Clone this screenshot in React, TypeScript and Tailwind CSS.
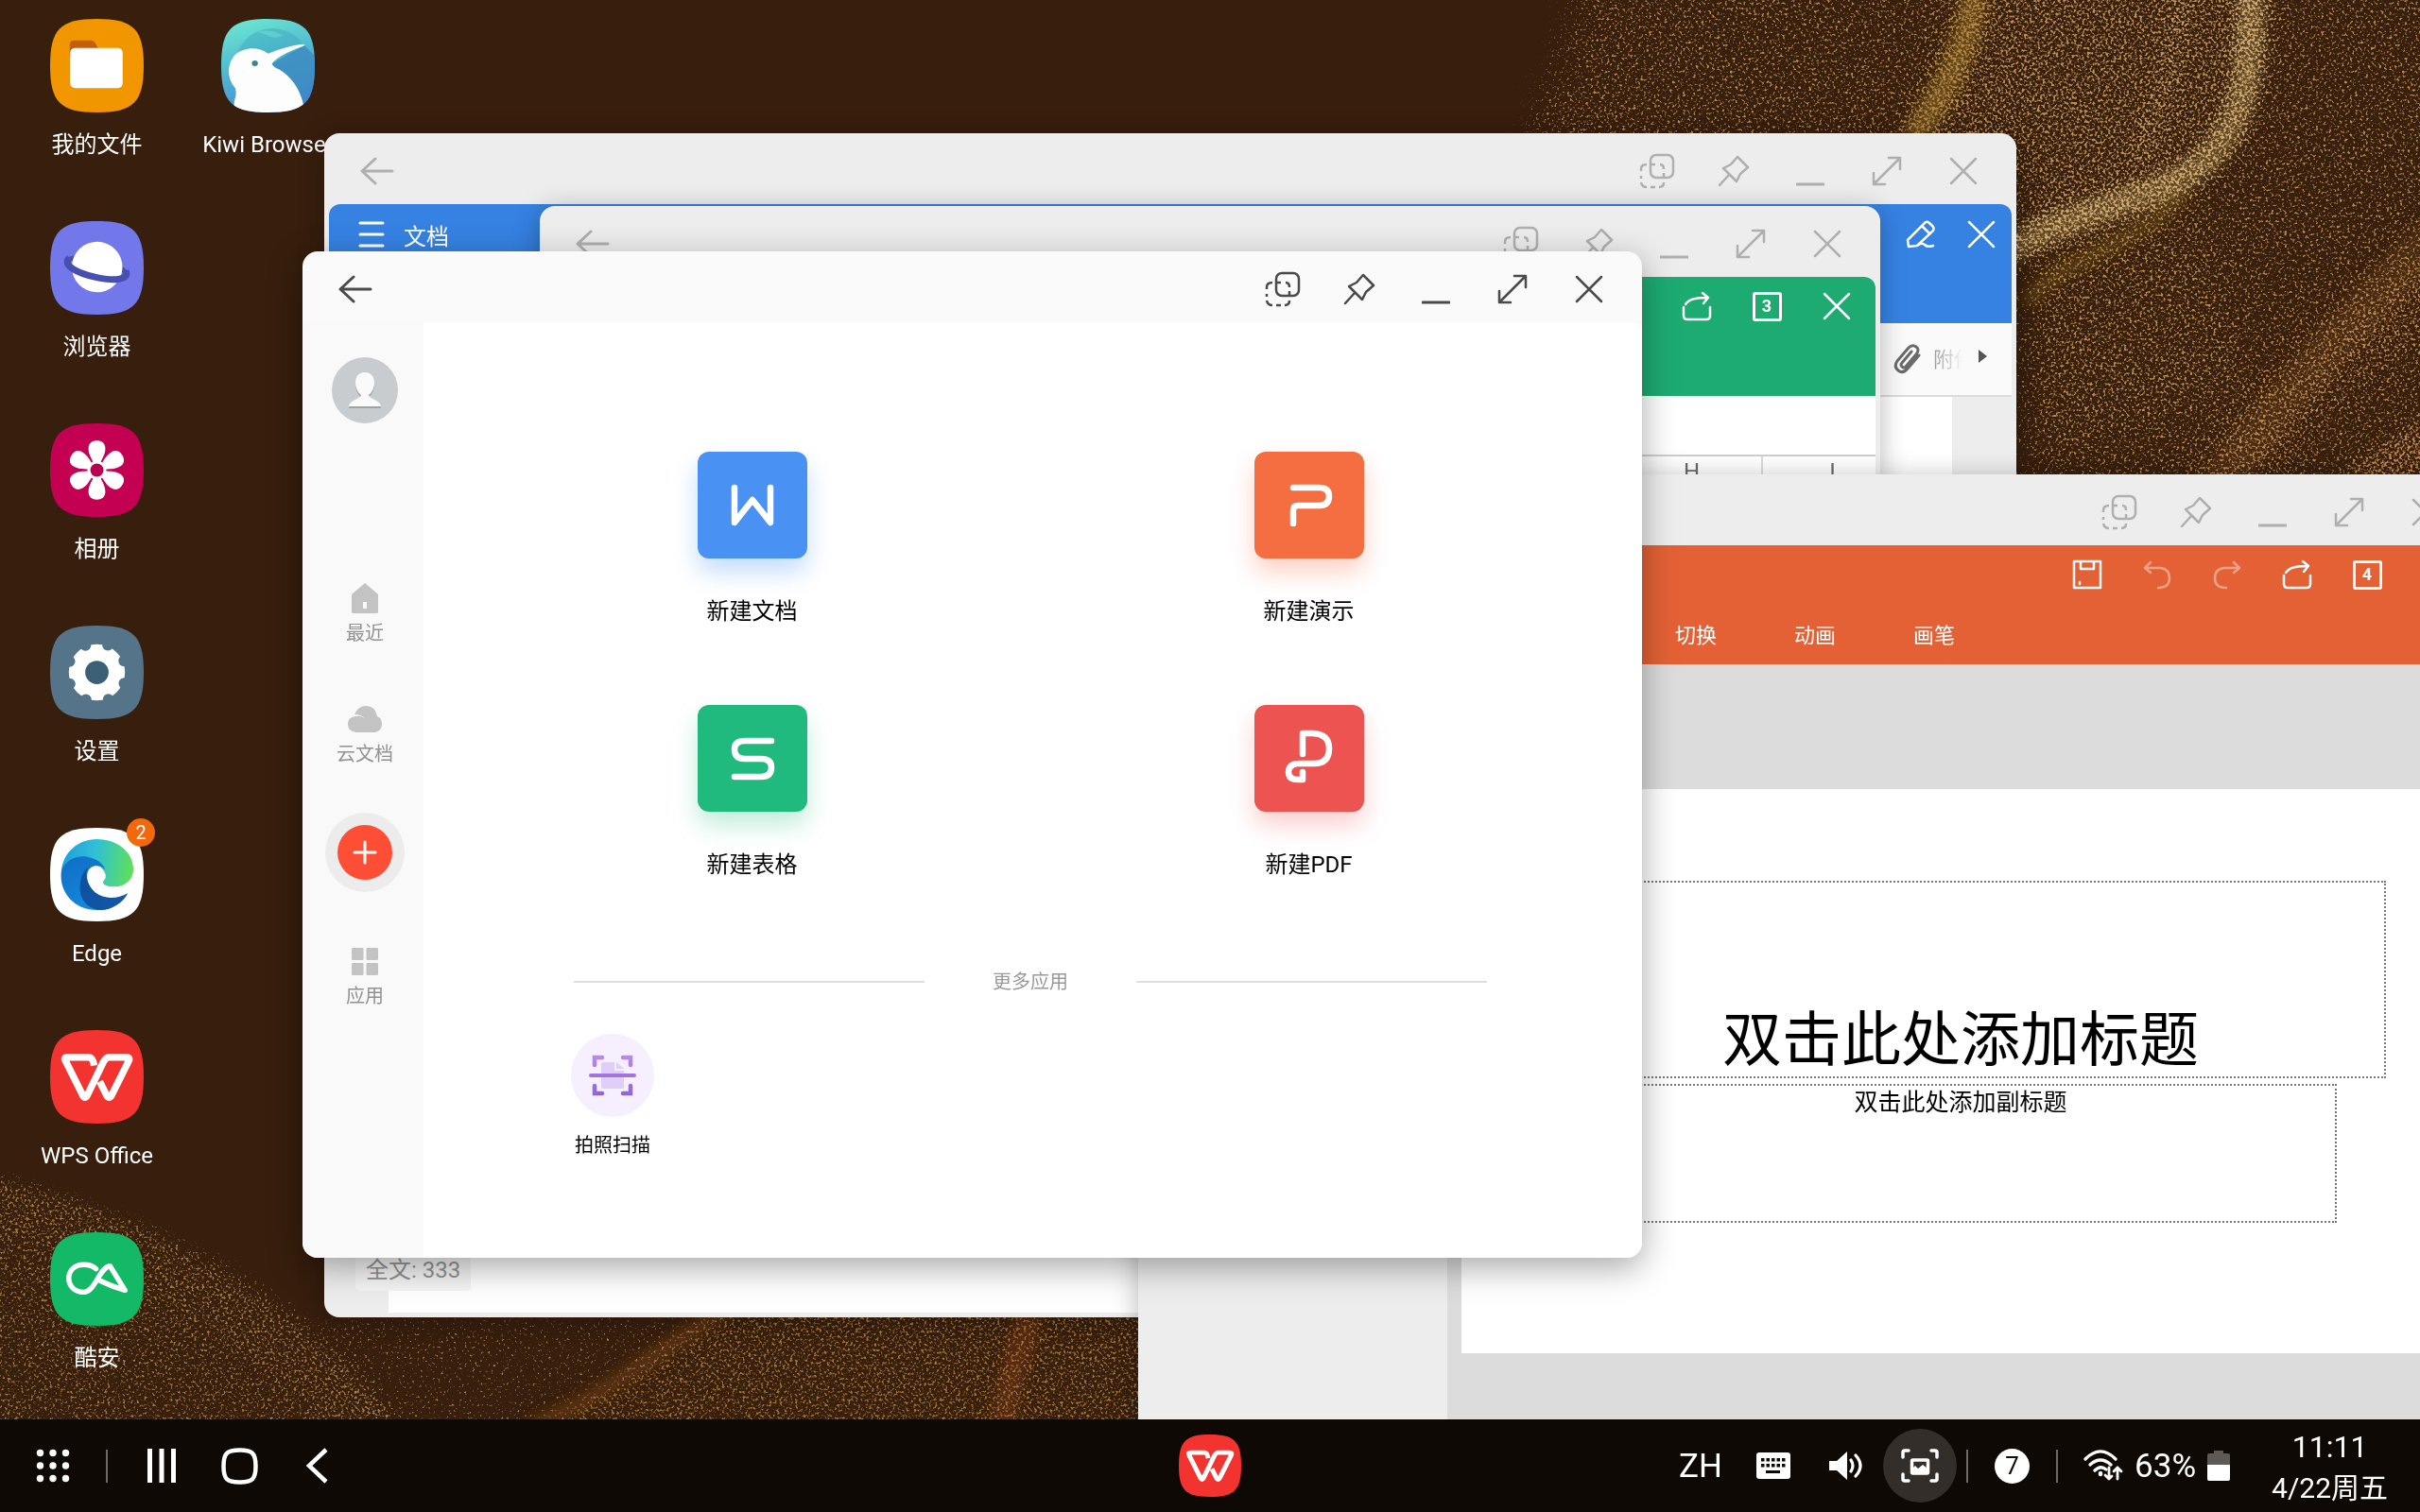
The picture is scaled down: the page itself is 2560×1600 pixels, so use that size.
import React from "react";

type IconProps = { w: number; h: number; vb?: string; sw?: number; className?: string; children: React.ReactNode };

function Icon({ w, h, vb, sw = 2.5, className, children }: IconProps) {
  return (
    <svg
      width={w}
      height={h}
      viewBox={vb ?? `0 0 ${w} ${h}`}
      fill="none"
      stroke="currentColor"
      strokeWidth={sw}
      strokeLinecap="round"
      strokeLinejoin="round"
      className={className}
      aria-hidden="true"
    >
      {children}
    </svg>
  );
}

/* ---------- Wallpaper ---------- */

function Wallpaper() {
  return (
    <svg className="absolute inset-0 h-full w-full" viewBox="0 0 2560 1502" preserveAspectRatio="xMidYMid slice" aria-hidden="true">
      <defs>
        <filter id="sand" x="0" y="0" width="2560" height="1502" filterUnits="userSpaceOnUse" colorInterpolationFilters="sRGB">
          <feTurbulence type="fractalNoise" baseFrequency="0.36" numOctaves="2" seed="7" result="n" />
          <feColorMatrix in="n" type="matrix" values="0 0 0 0 1  0 0 0 0 1  0 0 0 0 1  1 0 0 0 0" result="na" />
          <feComposite in="na" in2="SourceAlpha" operator="arithmetic" k1="0" k2="1" k3="0.36" k4="-0.7" result="c" />
          <feComponentTransfer in="c" result="specks">
            <feFuncA type="linear" slope="5" />
          </feComponentTransfer>
          <feComponentTransfer in="SourceGraphic" result="solid">
            <feFuncA type="linear" slope="6" />
          </feComponentTransfer>
          <feComposite in="solid" in2="specks" operator="in" />
        </filter>
        <filter id="soft6" x="-50%" y="-50%" width="200%" height="200%">
          <feGaussianBlur stdDeviation="7" />
        </filter>
        <filter id="soft20" x="-50%" y="-50%" width="200%" height="200%">
          <feGaussianBlur stdDeviation="18" />
        </filter>
      </defs>
      <rect width="2560" height="1502" fill="#371e0d" />
      <g filter="url(#soft6)" fill="none">
        <path d="M2090 -20 C2085 50 2060 90 2022 150" stroke="#7d5c17" strokeWidth="26" opacity="0.7" />
        <path d="M2380 -20 C2385 100 2370 170 2270 205 C2200 230 2160 240 2120 270" stroke="#a98950" strokeWidth="26" opacity="0.4" />
        <path d="M2310 200 C2270 260 2180 270 2145 320" stroke="#7d5c17" strokeWidth="14" opacity="0.5" />
        <path d="M2590 240 C2520 300 2450 380 2340 520" stroke="#7a4d1e" strokeWidth="44" opacity="0.25" />
        <path d="M770 1385 C690 1430 640 1480 560 1510" stroke="#7a4514" strokeWidth="14" opacity="0.6" />
        <path d="M1090 1390 C1075 1440 1065 1470 1060 1520" stroke="#70330f" strokeWidth="26" opacity="0.6" />
      </g>
      <g filter="url(#sand)">
        <g filter="url(#soft20)">
          <path d="M1680 -40 L1610 170 L2140 170 L2140 520 L2600 520 L2600 -40 Z" fill="#b98d50" opacity="0.42" />
          <path d="M2080 -40 L2010 170 L2140 260 L2300 200 L2400 60 L2400 -40 Z" fill="#bd9358" opacity="0.3" />
          <path d="M2150 260 L2330 210 L2380 420 L2130 480 Z" fill="#bd9358" opacity="0.16" />
          <path d="M2600 240 C2500 300 2420 380 2300 520 L2410 520 L2440 440 L2600 330 Z" fill="#c08850" opacity="0.32" />
        </g>
        <g filter="url(#soft6)">
          <path d="M-20 1240 C60 1262 160 1290 260 1358 C320 1395 370 1440 430 1520 L-20 1520 Z" fill="#a47d42" opacity="0.42" />
          <path d="M-20 1236 C60 1258 160 1286 270 1350 C320 1385 370 1430 430 1520 L350 1520 C250 1400 120 1350 -20 1300 Z" fill="#a47d42" opacity="0.14" />
          <path d="M770 1380 C690 1430 640 1480 560 1510 L1220 1520 L1220 1380 Z" fill="#a2743a" opacity="0.5" />
          <path d="M330 1395 L760 1395 L560 1510 L400 1510 Z" fill="#b58e58" opacity="0.2" />
          <path d="M2600 420 L2450 520 L2520 520 L2600 470 Z" fill="#c08850" opacity="0.5" />
        </g>
        <g filter="url(#soft6)" fill="none">
          <path d="M2090 -20 C2085 50 2060 90 2022 150" stroke="#a98338" strokeWidth="30" opacity="0.4" />
          <path d="M2380 -20 C2385 100 2370 170 2270 205 C2200 230 2160 240 2120 270" stroke="#d9bd80" strokeWidth="34" opacity="0.5" />
          <path d="M2310 -20 C2300 60 2290 110 2260 170" stroke="#d3a86a" strokeWidth="20" opacity="0.3" />
        </g>
      </g>
    </svg>
  );
}

/* ---------- Desktop icons ---------- */

const SQUIRCLE = "M0 50 C0 11 11 0 50 0 S100 11 100 50 89 100 50 100 0 89 0 50Z";

const WPS_MARK =
  "M47 38 C46 31 44 29 41 29 H19 Q14 29 16.500 33 L35 70 Q37 74 39.500 70 L57 34 Q60 29 63 29 H81 Q86 29 84 33 L65.500 70 Q63 74 60.500 70 L53 55";

function FilesArt() {
  return (
    <>
      <path d={SQUIRCLE} fill="#f29600" />
      <path d="M21 40 V28 Q21 23 26 23 H43 Q47 23 49 27 L54 36 Z" fill="#c25e0c" />
      <rect x="21.500" y="31" width="56" height="43" rx="5" fill="#fff" />
    </>
  );
}

function KiwiArt() {
  return (
    <>
      <defs>
        <linearGradient id="kiwiBg" x1="0.300" y1="0" x2="0.600" y2="1">
          <stop offset="0" stopColor="#6ae4d2" />
          <stop offset="0.500" stopColor="#4fb4cf" />
          <stop offset="1" stopColor="#4a86dc" />
        </linearGradient>
        <clipPath id="kiwiClip">
          <path d={SQUIRCLE} />
        </clipPath>
      </defs>
      <g clipPath="url(#kiwiClip)">
        <rect width="100" height="100" fill="url(#kiwiBg)" />
        <circle cx="55" cy="50" r="40" fill="#3fa9bf" opacity="0.5" />
        <path d="M38 14 Q54 10 66 18 Q56 22 50 18 Q44 16 38 14Z" fill="#6ad8d0" opacity="0.6" />
        <path d="M54 48 L89 28 L100 40 V90 H86 Z" fill="#3c86c0" opacity="0.7" />
        <path
          d="M13 102 L14 88 Q17 80 15 74 Q8 66 8 55 Q10 34 31 31.500 Q42 31 50 37 Q70 29 87 27 Q91 27 88 29 Q62 38 54 48 Q56 52 62 54 Q82 66 88 92 V102 Z"
          fill="#fdfdfd"
        />
        <ellipse cx="36" cy="47.500" rx="3.200" ry="3" fill="#3d8195" />
      </g>
    </>
  );
}

function BrowserArt() {
  return (
    <>
      <path d={SQUIRCLE} fill="#7277ea" />
      <g transform="rotate(13 50 50)">
        <ellipse cx="50" cy="50" rx="32" ry="8.500" fill="none" stroke="#474fb0" strokeWidth="5" />
        <circle cx="50" cy="49" r="27" fill="#fff" />
        <path d="M19 46 C12 56 32 60 50 60 C68 60 88 56 81 46" fill="none" stroke="#474fb0" strokeWidth="7" />
      </g>
    </>
  );
}

function GalleryArt() {
  return (
    <>
      <path d={SQUIRCLE} fill="#c40052" />
      {[0, 60, 120, 180, 240, 300].map((a) => (
        <path
          key={a}
          transform={`rotate(${a} 50 50)`}
          d="M47 44 C45 38 41 34 41 27 C41 21 45 18.500 50 18.500 C55 18.500 59 21 59 27 C59 34 55 38 53 44 L50 50Z"
          fill="#fff"
        />
      ))}
      <circle cx="50" cy="50" r="10" fill="#fff" />
      <circle cx="50" cy="50" r="7" fill="#b80050" />
    </>
  );
}

function SettingsArt() {
  return (
    <>
      <path d={SQUIRCLE} fill="#55748a" />
      <circle cx="50" cy="50" r="30" fill="#fff" />
      {[0, 45, 90, 135, 180, 225, 270, 315].map((a) => (
        <circle key={a} cx="50" cy="18.500" r="6" fill="#55748a" transform={`rotate(${a + 22} 50 50)`} />
      ))}
      <circle cx="50" cy="50" r="12.500" fill="#3b6074" />
    </>
  );
}

function EdgeArt() {
  return (
    <>
      <defs>
        <linearGradient id="edgeTop" x1="0" y1="0.400" x2="1" y2="0.500">
          <stop offset="0" stopColor="#1f9fdd" />
          <stop offset="0.450" stopColor="#2fc0d6" />
          <stop offset="1" stopColor="#5fe05a" />
        </linearGradient>
        <linearGradient id="edgeLeft" x1="0" y1="0" x2="0.700" y2="1">
          <stop offset="0" stopColor="#0f6cc4" />
          <stop offset="1" stopColor="#168ee0" />
        </linearGradient>
        <linearGradient id="edgeDark" x1="0" y1="0" x2="1" y2="0.600">
          <stop offset="0" stopColor="#0b4f9c" />
          <stop offset="1" stopColor="#1358a8" />
        </linearGradient>
      </defs>
      <path d={SQUIRCLE} fill="#fff" />
      <path d="M12 46 C14 26 30 12 50 12 C73 12 89 27 89 44 C89 56 80 63 69 63 C60 63 55 60 57 57 C60 54 60 51 58 47 C53 38 38 30 24 36 C18 38 14 42 12 46Z" fill="url(#edgeTop)" />
      <path d="M12 46 C17 33 30 29 40 31 C50 33 57 38 59 45 C52 38 42 40 40 48 C37 62 50 76 66 77 C73 77 79 73 83 70 C76 82 64 88 50 88 C27 88 9 70 12 46Z" fill="url(#edgeLeft)" />
      <path d="M42 41 C36 46 38 60 48 69 C58 77 72 76 83 70 C78 80 66 88 54 88 C40 87 31 76 32 63 C32 53 36 45 42 41Z" fill="url(#edgeDark)" />
    </>
  );
}

function WpsArt() {
  return (
    <>
      <path d={SQUIRCLE} fill="#f3332f" />
      <path d={WPS_MARK} fill="none" stroke="#fff" strokeWidth="7.500" strokeLinecap="butt" strokeLinejoin="round" />
    </>
  );
}

function CoolapkArt() {
  return (
    <>
      <path d={SQUIRCLE} fill="#14b967" />
      <path
        d="M49 39 C46 36 42 34.500 36 34.500 C26 34.500 20 41 20 49 C20 57.500 26 64 36 64 C48 64 53 37 64 36 L80 62 Q66 58 54 52"
        fill="none"
        stroke="#fff"
        strokeWidth="5.500"
        strokeLinecap="round"
        strokeLinejoin="round"
      />
    </>
  );
}

type App = { name: string; art: React.ReactNode; badge?: string };

const COLUMN_ONE: App[] = [
  { name: "我的文件", art: <FilesArt /> },
  { name: "浏览器", art: <BrowserArt /> },
  { name: "相册", art: <GalleryArt /> },
  { name: "设置", art: <SettingsArt /> },
  { name: "Edge", art: <EdgeArt />, badge: "2" },
  { name: "WPS Office", art: <WpsArt /> },
  { name: "酷安", art: <CoolapkArt /> },
];

const COLUMN_TWO: App[] = [{ name: "Kiwi Browser", art: <KiwiArt /> }];

function DesktopIcon({ name, art, badge }: App) {
  return (
    <button className="flex h-[214px] w-[181px] flex-col items-center pt-5 text-white">
      <span className="relative">
        <svg width="99" height="99" viewBox="0 0 100 100" aria-hidden="true">
          {art}
        </svg>
        {badge && (
          <span className="absolute -top-2.5 -right-3 flex h-[30px] w-[30px] items-center justify-center rounded-full bg-[#f2690d] text-[20px]">
            {badge}
          </span>
        )}
      </span>
      <span className="mt-4 text-[24px] leading-9 whitespace-nowrap">{name}</span>
    </button>
  );
}

/* ---------- Window frame ---------- */

function BackArrow() {
  return (
    <Icon w={36} h={30} sw={3}>
      <path d="M16 2 L2 15 L16 28 M2 15 H34" />
    </Icon>
  );
}

function Cross() {
  return (
    <Icon w={30} h={30}>
      <path d="M2 2 L28 28 M28 2 L2 28" />
    </Icon>
  );
}

const FRAME_BUTTONS: { label: string; icon: React.ReactNode }[] = [
  {
    label: "切换视图",
    icon: (
      <Icon w={38} h={38}>
        <rect x="12" y="2" width="24" height="24" rx="6" />
        <path d="M2 19 V17 Q2 12 8 12 M13 12 H17 M22 12 Q26 12 26 17 M26 21 V25 M2 24 V27 M2 31 Q3 36 8 36 M12 36 H17 M21 36 Q26 36 26 31" strokeLinecap="butt" />
      </Icon>
    ),
  },
  {
    label: "固定",
    icon: (
      <Icon w={34} h={34}>
        <path d="M21 2 L32 13 L24 20 L20 28 L6 14 L14 10 Z M12 21 L2 32" />
      </Icon>
    ),
  },
  {
    label: "最小化",
    icon: (
      <Icon w={30} h={32} sw={3}>
        <path d="M1 30 H29" />
      </Icon>
    ),
  },
  {
    label: "最大化",
    icon: (
      <Icon w={32} h={32}>
        <path d="M2 30 L30 2 M18 2 H30 V14 M2 18 V30 H14" />
      </Icon>
    ),
  },
  { label: "关闭", icon: <Cross /> },
];

function Window({
  title,
  active,
  place,
  children,
}: {
  title: string;
  active?: boolean;
  place: string;
  children: React.ReactNode;
}) {
  const tone = active
    ? "bg-[#fafafa] text-[#4a4a4a] shadow-[0_10px_36px_rgba(0,0,0,0.35)]"
    : "bg-[#ededed] text-[#afafaf] shadow-[0_4px_28px_rgba(0,0,0,0.28)]";
  return (
    <section aria-label={title} className={`absolute flex flex-col overflow-hidden rounded-2xl ${place} ${tone}`}>
      <header className="flex h-[75px] shrink-0 items-center pt-1 pr-4 pl-[38px]">
        <button aria-label="返回">
          <BackArrow />
        </button>
        <div className="ml-auto flex items-center">
          {FRAME_BUTTONS.map((b) => (
            <button key={b.label} aria-label={b.label} className="flex w-[81px] justify-center">
              {b.icon}
            </button>
          ))}
        </div>
      </header>
      {children}
    </section>
  );
}

/* ---------- Shared toolbar icons ---------- */

function ShareIcon() {
  return (
    <Icon w={32} h={32}>
      <path d="M4 14 C8 8 16 7 28 7 M22 2 L28 7 L23 13 M2 17 V26 Q2 30 6 30 H26 Q30 30 30 26 V17" />
    </Icon>
  );
}

function CountBox({ n }: { n: string }) {
  return (
    <span className="flex h-[31px] w-[31px] items-center justify-center rounded-[3px] border-[3px] border-current text-[18px] leading-none font-bold">
      {n}
    </span>
  );
}

function ToolButton({ label, children, faded }: { label: string; children: React.ReactNode; faded?: boolean }) {
  return (
    <button aria-label={label} className={`flex w-[74px] justify-center ${faded ? "opacity-40" : ""}`}>
      {children}
    </button>
  );
}

/* ---------- Document window ---------- */

function DocumentWindow() {
  return (
    <Window title="文档" place="top-[141px] left-[343px] h-[1253px] w-[1790px]">
      <div className="relative mx-[5px] mb-[5px] flex grow flex-col overflow-hidden rounded-t-xl">
        <div className="h-[126px] shrink-0 bg-[#3582e3] text-white">
          <div className="flex h-16 items-center pl-[31px]">
            <button aria-label="菜单">
              <Icon w={28} h={28} sw={3}>
                <path d="M2 2 H26 M2 14 H26 M2 26 H26" />
              </Icon>
            </button>
            <span className="ml-5 pt-1.5 text-[24px]">文档</span>
            <div className="ml-auto flex items-center">
              <button aria-label="编辑" className="flex w-16 justify-center">
                <Icon w={32} h={32}>
                  <path d="M3 29 L2 22 L21 3 Q23 2 25 4 L29 8 Q30 10 29 12 L12 28 Z M17 7 L25 15 M12 28 Q17 24 20 27 Q23 30 29 28" />
                </Icon>
              </button>
              <button aria-label="关闭文档" className="flex w-16 justify-center">
                <Cross />
              </button>
            </div>
          </div>
        </div>
        <div className="flex h-[78px] shrink-0 items-center justify-end gap-3 border-b-2 border-[#dcdcdc] bg-[#fafafa] pr-[26px]">
          <button className="flex items-center gap-3">
            <Icon w={30} h={32} sw={3} className="text-[#6a6a6a]">
              <path d="M27 12 L15 26 Q10 32 5 28 Q0 24 4 18 L16 4 Q20 0 24 3 Q28 6 24 11 L13 24 Q11 26 9 24 Q7 22 9 20 L19 8" />
            </Icon>
            <span className="w-[32px] overflow-hidden bg-gradient-to-r from-[#9a9a9a] to-[#fafafa] bg-clip-text text-[22px] whitespace-nowrap text-transparent">
              附件
            </span>
          </button>
          <button aria-label="更多工具" className="ml-1 pb-1.5">
            <svg width="9" height="14" viewBox="0 0 9 14" aria-hidden="true">
              <path d="M0 0 L9 7 L0 14Z" fill="#555" />
            </svg>
          </button>
        </div>
        <div className="mx-[63px] grow bg-white" />
        <p className="absolute bottom-[23px] left-[28px] rounded bg-[#f5f5f5] px-[11px] pt-1.5 pb-1.5 text-[24px] leading-8 text-[#939393]">
          全文: 333
        </p>
      </div>
    </Window>
  );
}

/* ---------- Spreadsheet window ---------- */

function SheetWindow() {
  return (
    <Window title="表格" place="top-[218px] left-[571px] h-[1065px] w-[1418px]">
      <div className="mx-[5px] mb-[5px] flex grow flex-col overflow-hidden rounded-t-xl bg-white">
        <div className="h-[126px] shrink-0 bg-[#1dab72] text-white">
          <div className="flex h-[62px] items-center justify-end pr-1">
            <ToolButton label="分享">
              <ShareIcon />
            </ToolButton>
            <ToolButton label="打开的文件">
              <CountBox n="3" />
            </ToolButton>
            <ToolButton label="关闭表格">
              <Cross />
            </ToolButton>
          </div>
        </div>
        <div className="h-[64px] shrink-0 border-b-2 border-[#cfcfcf]" />
        <table className="w-max table-fixed text-[24px] text-[#6a6a6a]">
          <thead>
            <tr>
              <th className="w-[96px] min-w-[96px] border-r-2 border-[#dcdcdc]" aria-label="行号" />
              {["A", "B", "C", "D", "E", "F", "G", "H", "I"].map((c) => (
                <th key={c} className="w-[149px] min-w-[149px] border-r-2 border-[#dcdcdc] py-0 leading-8 font-normal">
                  {c}
                </th>
              ))}
            </tr>
          </thead>
        </table>
      </div>
    </Window>
  );
}

/* ---------- Presentation window ---------- */

function SlidesWindow() {
  return (
    <Window title="演示" place="top-[502px] left-[1204px] h-[1065px] w-[1418px]">
      <div className="mx-[5px] mb-[5px] flex grow flex-col overflow-hidden rounded-t-xl">
        <div className="h-[126px] shrink-0 bg-[#e46135] text-white">
          <div className="flex h-[62px] items-center justify-end pr-0.5">
            <ToolButton label="保存">
              <Icon w={32} h={32}>
                <path d="M2 2 H30 V30 H2 Z M9 2 V10 H23 V2 M8 24 V26" />
              </Icon>
            </ToolButton>
            <ToolButton label="撤销" faded>
              <Icon w={30} h={32}>
                <path d="M8 3 L2 9 L8 14 M2 9 H18 Q28 10 28 20 Q28 30 16 30" />
              </Icon>
            </ToolButton>
            <ToolButton label="重做" faded>
              <Icon w={30} h={32}>
                <path d="M22 3 L28 9 L22 14 M28 9 H12 Q2 10 2 20 Q2 30 14 30" />
              </Icon>
            </ToolButton>
            <ToolButton label="分享">
              <ShareIcon />
            </ToolButton>
            <ToolButton label="打开的文件">
              <CountBox n="4" />
            </ToolButton>
            <ToolButton label="关闭演示">
              <Cross />
            </ToolButton>
          </div>
          <nav className="flex h-16 items-center pt-0.5 pl-[522px] text-[22px]">
            {["切换", "动画", "画笔"].map((t) => (
              <button key={t} className="w-[126px]">
                {t}
              </button>
            ))}
          </nav>
        </div>
        <div className="flex grow">
          <div className="w-[322px] shrink-0" />
          <div className="grow bg-[#dcdcdc] px-[15px] pt-[132px]">
            <div className="h-[597px] bg-white pt-[97px] text-center text-black">
              <div className="mx-auto flex h-[209px] w-[900px] items-end justify-center border-2 border-dotted border-[#777] text-[63px] leading-[76px]">
                双击此处添加标题
              </div>
              <div className="mx-auto mt-1.5 h-[147px] w-[796px] border-2 border-dotted border-[#777] text-[25px] leading-9">
                双击此处添加副标题
              </div>
            </div>
          </div>
        </div>
      </div>
    </Window>
  );
}

/* ---------- Launcher window ---------- */

const TILES: { name: string; tone: string; d: string }[] = [
  { name: "新建文档", tone: "bg-[#4991f2] shadow-[0_14px_26px_rgba(73,145,242,0.32)]", d: "M39 38 V75 L58 51 L77 75 V38" },
  { name: "新建演示", tone: "bg-[#f56e42] shadow-[0_14px_26px_rgba(245,110,66,0.32)]", d: "M41 38 H68 Q79 38 79 47 Q79 57 68 57 H46 Q41 57 41 62 V76" },
  { name: "新建表格", tone: "bg-[#20ba7e] shadow-[0_14px_26px_rgba(32,186,126,0.28)]", d: "M78 38 H50 Q39 38 39 47 Q39 57 50 57 H67 Q78 57 78 66 Q78 76 67 76 H39" },
  { name: "新建PDF", tone: "bg-[#ec5351] shadow-[0_14px_26px_rgba(236,83,81,0.28)]", d: "M51 52 V30 H62 Q79 31 79 46 Q79 62 63 62 H48 Q36 62 36 71 Q36 79 46 79 H51 V71" },
];

function NavItem({ label, children }: { label: string; children: React.ReactNode }) {
  return (
    <button className="flex h-32 w-full flex-col items-center text-[20px] leading-7 text-[#929292]">
      <span className="mb-1.5 flex h-[34px] items-center text-[#c3c3c3]">{children}</span>
      {label}
    </button>
  );
}

function LauncherWindow() {
  return (
    <Window title="WPS Office" active place="top-[266px] left-[320px] h-[1065px] w-[1417px]">
      <div className="flex grow">
        <nav className="flex w-[128px] shrink-0 flex-col items-center bg-[#f9f9f9] pt-[37px] pl-1">
          <button aria-label="账户" className="flex h-[70px] w-[70px] items-center justify-center overflow-hidden rounded-full bg-[#c9cccf]">
            <svg width="36" height="40" viewBox="0 0 36 40" aria-hidden="true">
              <path d="M18 3 C25 3 28 8 28 14 C28 20 25 25 22 27 C22 31 34 32 35 39 H1 C2 32 14 31 14 27 C11 25 8 20 8 14 C8 8 11 3 18 3Z" fill="#9fa2a5" />
              <path d="M18 1 C25 1 28 6 28 12 C28 18 25 23 22 25 C22 29 34 30 35 37 H1 C2 30 14 29 14 25 C11 23 8 18 8 12 C8 6 11 1 18 1Z" fill="#fafafa" />
            </svg>
          </button>
          <div className="mt-[168px] w-full">
            <NavItem label="最近">
              <svg width="30" height="34" viewBox="0 0 30 34" aria-hidden="true">
                <path d="M15 1 L29 13 V32 Q29 33 28 33 H2 Q1 33 1 32 V13 Z" fill="currentColor" />
                <rect x="13" y="21" width="4" height="7" fill="#fafafa" />
              </svg>
            </NavItem>
            <NavItem label="云文档">
              <svg width="36" height="28" viewBox="0 0 36 28" aria-hidden="true">
                <path d="M9 28 Q0 27 0 19 Q0 12 8 11 Q14 10 18 13 Q14 9 7 9 Q11 0 19 0 Q29 0 31 11 Q36 13 36 19 Q36 27 28 28 Z" fill="currentColor" />
              </svg>
            </NavItem>
            <div className="-mt-3 flex h-[140px] justify-center">
              <button aria-label="新建" className="flex h-[84px] w-[84px] items-center justify-center rounded-full bg-[#ececec]">
                <span className="flex h-[58px] w-[58px] items-center justify-center rounded-full bg-[#ff4e36] text-white">
                  <Icon w={26} h={26} sw={3}>
                    <path d="M13 2 V24 M2 13 H24" />
                  </Icon>
                </span>
              </button>
            </div>
            <NavItem label="应用">
              <svg width="30" height="30" viewBox="0 0 30 30" fill="currentColor" aria-hidden="true">
                <rect x="1" y="1" width="12.500" height="13" rx="1" />
                <rect x="16.500" y="1" width="12.500" height="13" rx="1" />
                <rect x="1" y="17" width="12.500" height="13" rx="1" />
                <rect x="16.500" y="17" width="12.500" height="13" rx="1" />
              </svg>
            </NavItem>
          </div>
        </nav>
        <main className="grow rounded-tr-xl bg-white pr-[5px] text-black">
          <div className="grid grid-cols-2 gap-y-[81px] px-[53px] pt-[137px]">
            {TILES.map((t) => (
              <button key={t.name} className="flex flex-col items-center">
                <span className={`rounded-xl ${t.tone}`}>
                  <Icon w={116} h={113} sw={6.500} className="text-white">
                    <path d={t.d} />
                  </Icon>
                </span>
                <span className="mt-[38px] text-[24px] leading-9">{t.name}</span>
              </button>
            ))}
          </div>
          <div className="mx-[159px] mt-[90px] flex items-center text-[20px] leading-8 text-[#9a9a9a]">
            <span className="h-0.5 grow bg-[#dfdfdf]" />
            <h2 className="w-[224px] text-center">更多应用</h2>
            <span className="h-0.5 grow bg-[#dfdfdf]" />
          </div>
          <button className="mt-[39px] ml-[148px] flex w-[104px] flex-col items-center text-[20px] leading-7">
            <span className="flex h-[88px] w-[88px] items-center justify-center rounded-full bg-[#f5effe]">
              <svg width="52" height="48" viewBox="0 0 52 48" fill="none" aria-hidden="true">
                <defs>
                  <linearGradient id="scanTone" gradientUnits="userSpaceOnUse" x1="0" y1="0" x2="0" y2="48">
                    <stop offset="0" stopColor="#bb8cf0" />
                    <stop offset="1" stopColor="#8f62d4" />
                  </linearGradient>
                </defs>
                <path d="M16 10 H28 V19 H38 V36 Q38 38 36 38 H16 Q14 38 14 36 V12 Q14 10 16 10Z M30 10 L38 17 H30Z" fill="#dfcff8" />
                <path d="M7 13 V5 H15 M37 5 H45 V13 M7 35 V43 H15 M37 43 H45 V35" stroke="url(#scanTone)" strokeWidth="4.500" strokeLinecap="round" />
                <rect x="1" y="22" width="50" height="4" rx="2" fill="#a374e0" />
              </svg>
            </span>
            <span className="mt-4">拍照扫描</span>
          </button>
        </main>
      </div>
    </Window>
  );
}

/* ---------- Taskbar ---------- */

function Divider({ className = "" }: { className?: string }) {
  return <span className={`h-[35px] w-0.5 bg-[#6d6a66] ${className}`} />;
}

function Taskbar() {
  return (
    <footer className="relative z-10 grid h-[98px] shrink-0 grid-cols-[1fr_auto_1fr] items-center bg-[#0e0904] text-white">
      <div className="flex items-center pl-[38px]">
        <button aria-label="应用列表">
          <svg width="36" height="36" viewBox="0 0 36 36" fill="#fff" aria-hidden="true">
            {[4.5, 18, 31.5].map((y) => [4.5, 18, 31.5].map((x) => <circle key={`${x}-${y}`} cx={x} cy={y} r="3.700" />))}
          </svg>
        </button>
        <Divider className="ml-[38px]" />
        <button aria-label="最近任务" className="ml-[42px]">
          <svg width="30" height="36" viewBox="0 0 30 36" fill="#fff" aria-hidden="true">
            <rect width="5" height="36" />
            <rect x="12.500" width="5" height="36" />
            <rect x="25" width="5" height="36" />
          </svg>
        </button>
        <button aria-label="主屏幕" className="ml-12">
          <svg width="39" height="39" viewBox="0 0 39 39" fill="none" aria-hidden="true">
            <path d="M2.500 19.500 C2.500 6 6 2.500 19.500 2.500 S36.500 6 36.500 19.500 33 36.500 19.500 36.500 2.500 33 2.500 19.500Z" stroke="#fff" strokeWidth="4.500" />
          </svg>
        </button>
        <button aria-label="返回" className="ml-[50px]">
          <svg width="24" height="38" viewBox="0 0 24 38" fill="none" aria-hidden="true">
            <path d="M22 2 L4 19 L22 36" stroke="#fff" strokeWidth="4.500" />
          </svg>
        </button>
      </div>

      <button aria-label="WPS Office">
        <svg width="66" height="66" viewBox="0 0 100 100" aria-hidden="true">
          <WpsArt />
        </svg>
      </button>

      <div className="flex items-center justify-end pr-[34px] text-[35px] leading-none">
        <button aria-label="输入法 ZH">ZH</button>
        <button aria-label="键盘" className="ml-9">
          <svg width="36" height="28" viewBox="0 0 36 28" aria-hidden="true">
            <rect width="36" height="28" rx="3" fill="#fff" />
            <g fill="#0e0904">
              {[6, 12].map((y) => [5, 10.5, 16, 21.5, 27].map((x) => <rect key={`${x}-${y}`} x={x} y={y} width="3.500" height="3.500" />))}
              <rect x="10" y="19" width="15" height="3" />
            </g>
          </svg>
        </button>
        <button aria-label="音量" className="ml-[41px]">
          <Icon w={37} h={32} sw={3.200}>
            <path d="M0 11 H8 L19 1 V31 L8 21 H0 Z" fill="currentColor" stroke="none" />
            <path d="M23 10 Q27 16 23 22 M28 5 Q38 16 28 27" />
          </Icon>
        </button>
        <button aria-label="截屏" className="ml-5 flex h-[78px] w-[78px] items-center justify-center rounded-full bg-[#332e2a]">
          <Icon w={40} h={36} sw={3.500}>
            <path d="M2 9 V4 Q2 2 4 2 H8 M32 2 H36 Q38 2 38 4 V9 M38 27 V32 Q38 34 36 34 H32 M8 34 H4 Q2 34 2 32 V27" />
            <rect x="11.500" y="12" width="17" height="14" rx="1" />
            <path d="M11 26 V22 L15 18 L18 21 L23 17 L28 21 V26Z" fill="currentColor" stroke="none" />
          </Icon>
        </button>
        <Divider className="ml-2.5" />
        <button aria-label="7 条通知" className="ml-7 flex h-[37px] w-[37px] items-center justify-center rounded-full bg-white text-[26px] text-[#0e0904]">
          7
        </button>
        <Divider className="ml-7" />
        <Icon w={42} h={34} sw={3.200} className="ml-[27px]">
          <path d="M2 10 Q18 -6 34 10 M7 16 Q18 6 29 16 M12 22 Q18 16 24 21" />
          <path d="M18 25 V26" strokeWidth="4.500" />
          <path d="M27 19 V31 M23 27 L27 31 L30 28 M36 31 V19 M32 23 L36 19 L40 23" strokeWidth="2.800" />
        </Icon>
        <span className="ml-3">63%</span>
        <svg width="24" height="32" viewBox="0 0 24 32" className="ml-3" aria-hidden="true">
          <path d="M7 0 H17 V3 H22 Q24 3 24 5 V16 H0 V5 Q0 3 2 3 H7Z" fill="#5d5955" />
          <path d="M0 15 H24 V30 Q24 32 22 32 H2 Q0 32 0 30Z" fill="#fff" />
        </svg>
        <div className="ml-11 pt-1 text-center leading-[43px]">
          <div className="text-[32px]">11:11</div>
          <div className="text-[30px]">4/22周五</div>
        </div>
      </div>
    </footer>
  );
}

export default function App() {
  return (
    <div className="flex h-screen flex-col overflow-hidden bg-[#371e0d] font-[Roboto,'Noto_Sans_CJK_SC',sans-serif]" lang="zh-CN">
      <div className="relative grow overflow-hidden">
        <Wallpaper />
        <div className="relative flex pl-3">
          {[COLUMN_ONE, COLUMN_TWO].map((col, i) => (
            <div key={i} className="flex flex-col">
              {col.map((a) => (
                <DesktopIcon key={a.name} {...a} />
              ))}
            </div>
          ))}
        </div>
        <DocumentWindow />
        <SheetWindow />
        <SlidesWindow />
        <LauncherWindow />
      </div>
      <Taskbar />
    </div>
  );
}
